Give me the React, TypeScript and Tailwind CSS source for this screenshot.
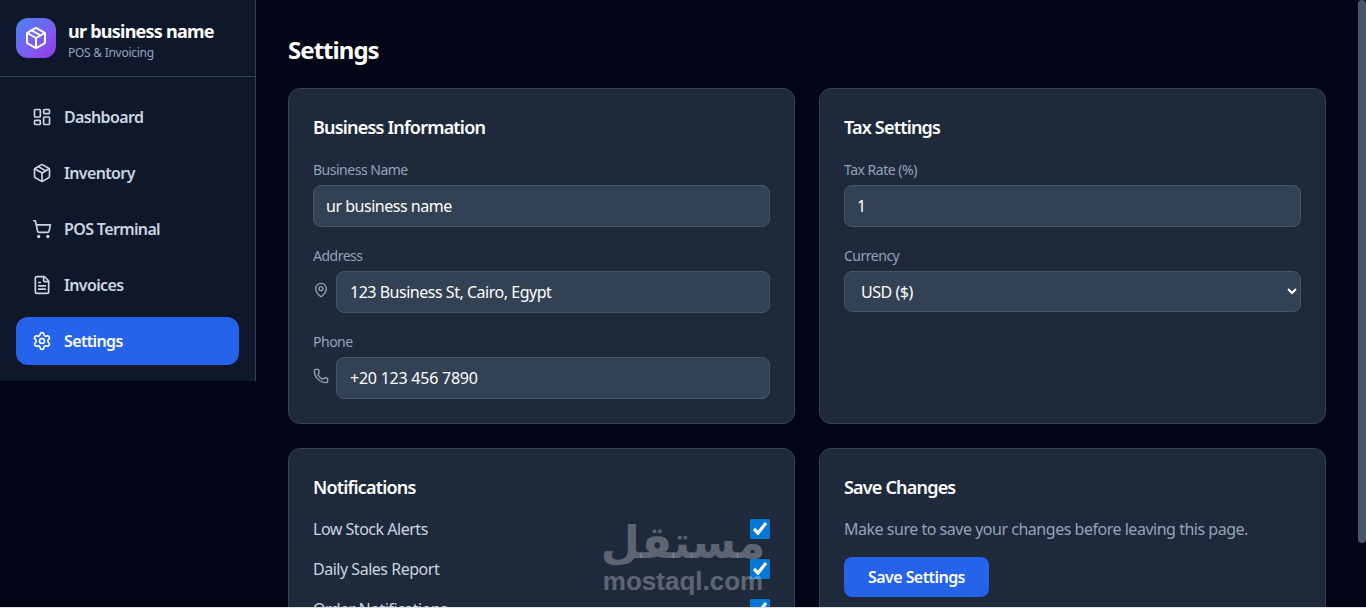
import React from "react";
import { LayoutDashboard, Package, ShoppingCart, FileText, Settings, MapPin, Phone } from "lucide-react";

const navItems = [
  { label: "Dashboard", icon: LayoutDashboard },
  { label: "Inventory", icon: Package },
  { label: "POS Terminal", icon: ShoppingCart },
  { label: "Invoices", icon: FileText },
  { label: "Settings", icon: Settings, active: true },
];

const inputClass =
  "w-full h-[42px] px-3 bg-[#334155] border border-[#475569] rounded-lg text-white text-base outline-none";

function Label({ children }: { children: React.ReactNode }) {
  return <label className="block text-sm leading-[18px] tracking-[-0.035em] text-[#94a3b8] mb-[6px]">{children}</label>;
}

function Card({ title, children }: { title: string; children: React.ReactNode }) {
  return (
    <div className="bg-[#1e293b] border border-[#334155] rounded-xl p-6">
      <h2 className="text-lg font-semibold tracking-[-0.045em] text-white">{title}</h2>
      {children}
    </div>
  );
}

function Toggle({ label }: { label: string }) {
  return (
    <div className="flex items-center justify-between h-6">
      <span className="text-[#cbd5e1] tracking-[-0.03em]">{label}</span>
      <input type="checkbox" defaultChecked className="w-5 h-5 accent-[#0078d4]" />
    </div>
  );
}

export default function App() {
  return (
    <div className="relative flex flex-col h-screen overflow-hidden bg-[#020617] tracking-[-0.03em] font-['Noto_Sans',sans-serif]">
      <div className="flex flex-1 min-h-0">
        {/* Sidebar */}
        <aside className="w-64 h-[381px] shrink-0 bg-[#0f172a] border-r border-[#334155]">
          <div className="flex items-center gap-3 p-4 border-b border-[#334155]">
            <div className="w-10 h-10 rounded-xl bg-gradient-to-br from-[#3b82f6] to-[#9333ea] flex items-center justify-center">
              <Package size={24} className="text-white" />
            </div>
            <div className="pt-px">
              <div className="text-lg leading-[28px] font-bold tracking-[-0.042em] text-white">ur business name</div>
              <div className="text-xs leading-[15px] tracking-[-0.022em] text-[#94a3b8]">POS &amp; Invoicing</div>
            </div>
          </div>
          <nav className="p-4 flex flex-col gap-2">
            {navItems.map((item) => (
              <a
                key={item.label}
                className={`flex items-center gap-3 h-12 px-4 rounded-xl font-semibold tracking-[-0.04em] ${
                  item.active ? "bg-[#2563eb] text-white" : "text-[#cbd5e1]"
                }`}
              >
                <item.icon size={20} />
                {item.label}
              </a>
            ))}
          </nav>
        </aside>

        {/* Main */}
        <main className="flex-1 min-w-0 p-8 overflow-hidden">
          <h1 className="pt-[2px] text-2xl font-bold tracking-[-0.04em] text-white mb-[22px]">Settings</h1>
          <div className="grid grid-cols-2 gap-6">
            <Card title="Business Information">
              <div className="mt-5 flex flex-col gap-5">
                <div>
                  <Label>Business Name</Label>
                  <input className={inputClass} defaultValue="ur business name" />
                </div>
                <div>
                  <Label>Address</Label>
                  <div className="flex items-start gap-[7px]">
                    <MapPin size={16} className="shrink-0 mt-[11px] text-[#94a3b8]" />
                    <input className={`${inputClass} pl-[13px]`} defaultValue="123 Business St, Cairo, Egypt" />
                  </div>
                </div>
                <div>
                  <Label>Phone</Label>
                  <div className="flex items-start gap-[7px]">
                    <Phone size={16} className="shrink-0 mt-[11px] text-[#94a3b8]" />
                    <input className={`${inputClass} pl-[13px] tracking-[-0.015em]`} defaultValue="+20 123 456 7890" />
                  </div>
                </div>
              </div>
            </Card>

            <Card title="Tax Settings">
              <div className="mt-5 flex flex-col gap-5">
                <div>
                  <Label>Tax Rate (%)</Label>
                  <input className={inputClass} defaultValue="1" />
                </div>
                <div>
                  <Label>Currency</Label>
                  <select className="w-full h-[41px] px-3 bg-[#334155] border border-[#475569] rounded-lg text-white text-base outline-none">
                    <option>USD ($)</option>
                  </select>
                </div>
              </div>
            </Card>

            <Card title="Notifications">
              <div className="mt-4 flex flex-col gap-4">
                <Toggle label="Low Stock Alerts" />
                <Toggle label="Daily Sales Report" />
                <Toggle label="Order Notifications" />
              </div>
            </Card>

            <Card title="Save Changes">
              <p className="mt-4 text-[#94a3b8]">Make sure to save your changes before leaving this page.</p>
              <button className="mt-4 h-10 px-6 bg-[#2563eb] text-white font-semibold tracking-[-0.035em] rounded-lg">
                Save Settings
              </button>
            </Card>
          </div>
        </main>

        {/* Page scrollbar */}
        <div className="w-2 shrink-0">
          <div className="h-[543px] bg-[#475569] rounded-full" />
        </div>
      </div>

      {/* window edge */}
      <div className="h-px shrink-0 bg-[#dfe3ea]" />

      {/* mostaql watermark */}
      <div className="absolute left-[603px] top-[518px] w-[160px] flex flex-col items-center tracking-normal text-white/[0.28] pointer-events-none">
        <span className="text-[45px] leading-[50px] font-bold font-['DejaVu_Sans',sans-serif]">مستقل</span>
        <span className="text-[26px] leading-[26px] font-bold font-['Liberation_Sans',sans-serif]">mostaql.com</span>
      </div>
    </div>
  );
}
